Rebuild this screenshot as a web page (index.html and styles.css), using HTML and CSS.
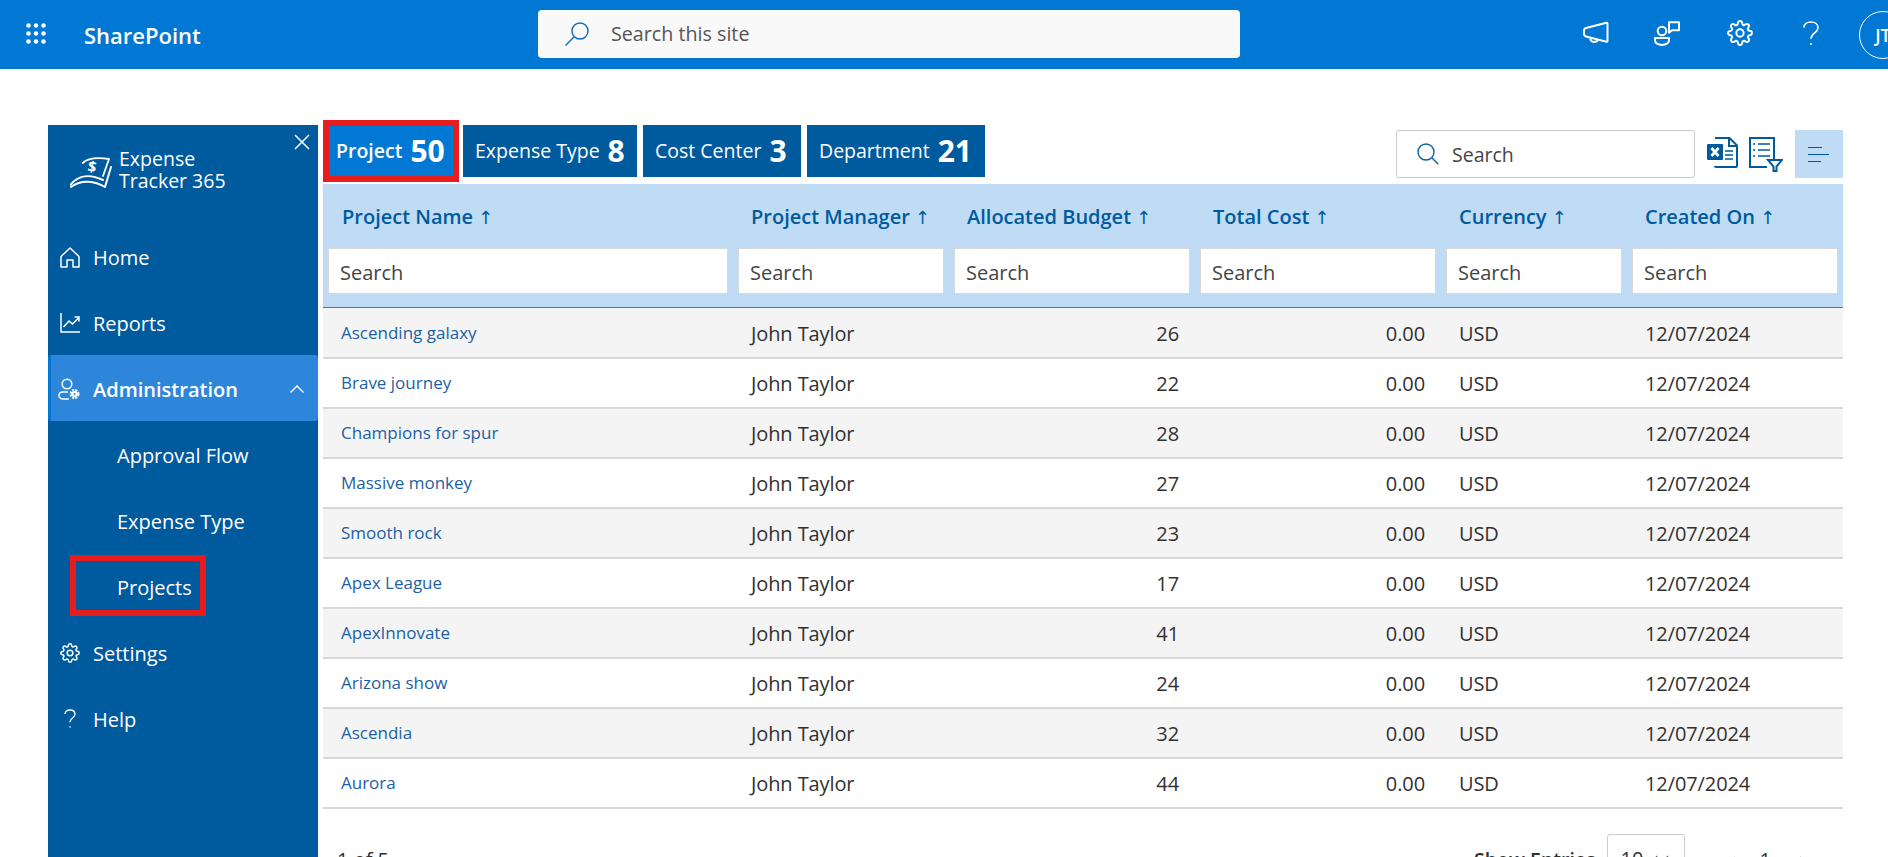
FILE: index.html
```html
<!DOCTYPE html>
<html lang="en">
<head>
<meta charset="utf-8">
<title>Expense Tracker 365</title>
<link rel="stylesheet" href="styles.css">
</head>
<body>
<header class="topbar">
  <svg class="waffle" width="20" height="21" viewBox="0 0 20 21" fill="#fff"><circle cx="2.5" cy="2.5" r="2.3"/><circle cx="10" cy="2.5" r="2.3"/><circle cx="17.5" cy="2.5" r="2.3"/><circle cx="2.5" cy="10.5" r="2.3"/><circle cx="10" cy="10.5" r="2.3"/><circle cx="17.5" cy="10.5" r="2.3"/><circle cx="2.5" cy="18.5" r="2.3"/><circle cx="10" cy="18.5" r="2.3"/><circle cx="17.5" cy="18.5" r="2.3"/></svg>
  <div class="brand">SharePoint</div>
  <div class="sitesearch">
    <svg width="26" height="26" viewBox="0 0 26 26" fill="none" stroke="#0f6cbd" stroke-width="1.4"><circle cx="16" cy="10" r="8"/><path d="M10.2 15.8 1.5 24.5"/></svg>
    <span>Search this site</span>
  </div>
  <div class="topicons">
    <svg class="ic-mega" width="26" height="24" viewBox="0 0 26 24" fill="none" stroke="#fff" stroke-width="2" stroke-linejoin="round"><path d="M24.500 2.500v17.500a.8.8 0 0 1-1 .8L3 15.500C1.500 15 1 14 1 12.500v-2.500c0-1.500.5-2.500 2-3l20.500-5.300a.8.8 0 0 1 1 .8z"/><path d="M7.500 16.500c-.5 3 1.500 4.500 3.500 4.500s3.500-1 4-2.500"/></svg>
    <svg class="ic-chat" width="26" height="25" viewBox="0 0 26 25" fill="none" stroke="#fff" stroke-width="2" stroke-linejoin="round"><circle cx="8" cy="10" r="4.300"/><path d="M1 17h14v2.500c0 2.500-3 4.500-7 4.500s-7-2-7-4.500z"/><path d="M15 1.200h10v8h-7l-3 2.500z"/></svg>
    <svg class="ic-gear" width="26" height="26" viewBox="0 0 24 24" fill="none" stroke="#fff" stroke-width="1.800"><circle cx="12" cy="12" r="3.400"/><path d="M19.400 15a1.650 1.650 0 0 0 .33 1.820l.06.06a2 2 0 0 1 0 2.830 2 2 0 0 1-2.830 0l-.06-.06a1.650 1.650 0 0 0-1.820-.33 1.650 1.650 0 0 0-1 1.510V21a2 2 0 0 1-2 2 2 2 0 0 1-2-2v-.09A1.650 1.650 0 0 0 9 19.400a1.650 1.650 0 0 0-1.820.33l-.06.06a2 2 0 0 1-2.830 0 2 2 0 0 1 0-2.830l.06-.06a1.650 1.650 0 0 0 .33-1.820 1.650 1.650 0 0 0-1.510-1H3a2 2 0 0 1-2-2 2 2 0 0 1 2-2h.09A1.650 1.650 0 0 0 4.600 9a1.650 1.650 0 0 0-.33-1.820l-.06-.06a2 2 0 0 1 0-2.830 2 2 0 0 1 2.830 0l.06.06a1.650 1.650 0 0 0 1.820.33H9a1.650 1.650 0 0 0 1-1.510V3a2 2 0 0 1 2-2 2 2 0 0 1 2 2v.09a1.650 1.650 0 0 0 1 1.510 1.650 1.650 0 0 0 1.820-.33l.06-.06a2 2 0 0 1 2.830 0 2 2 0 0 1 0 2.830l-.06.06a1.650 1.650 0 0 0-.33 1.820V9a1.650 1.650 0 0 0 1.510 1H21a2 2 0 0 1 2 2 2 2 0 0 1-2 2h-.09a1.650 1.650 0 0 0-1.510 1z"/></svg>
    <svg class="ic-help" width="16" height="25" viewBox="0 0 16 25" fill="none" stroke="#fff" stroke-width="1.600"><path d="M1 6.500C1 3 4 1 8 1s7 2.300 7 5.800c0 5.200-7 5.200-7 11"/><circle cx="8" cy="23" r="1" fill="#fff" stroke="none"/></svg>
    <div class="avatar">JT</div>
  </div>
</header>

<div class="app">
  <aside class="sidebar">
    <svg class="close" width="16" height="16" viewBox="0 0 16 16" stroke="#fff" stroke-width="1.500"><path d="M1 1l14 14M15 1 1 15"/></svg>
    <div class="logo">
      <svg width="42" height="34" viewBox="0 0 42 34" fill="none" stroke="#fff" stroke-linecap="round" stroke-linejoin="round"><path d="M12.700 8C18 3 26 2 39 4L33 21" stroke-width="1.800"/><path d="M41 12 35 32C25 26 12 24 1 32" stroke-width="2"/><path d="M0.500 30C8 20 20 19 33 25" stroke-width="2"/><text x="22" y="17" text-anchor="middle" font-family="Open Sans, sans-serif" font-size="15" font-weight="700" fill="#fff" stroke="none" transform="rotate(10 22 12)">$</text></svg>
      <div class="logotext">Expense<br>Tracker 365</div>
    </div>
    <nav class="nav">
      <a class="navitem">
        <svg width="20" height="21" viewBox="0 0 20 21" fill="none" stroke="#fff" stroke-width="1.500" stroke-linejoin="round"><path d="M1 9.500 10 1l9 8.500V20h-6v-7H7v7H1z"/></svg>
        <span>Home</span>
      </a>
      <a class="navitem">
        <svg width="20" height="20" viewBox="0 0 20 20" fill="none" stroke="#fff" stroke-width="1.500"><path d="M1 0v19h19"/><path d="M3.500 14 9 8l3.500 3L19 4.500M14.500 4H19v4.500"/></svg>
        <span>Reports</span>
      </a>
      <a class="navitem active">
        <svg width="22" height="22" viewBox="0 0 22 22" fill="none" stroke="#fff" stroke-width="1.500"><circle cx="9" cy="6" r="4.800"/><path d="M10 14H5c-2.500 0-4 1.500-4 3.500S3 21 5 21h6"/><circle cx="16.500" cy="16" r="3.500" stroke-width="3" stroke-dasharray="1.800 1"/><circle cx="16.500" cy="16" r="3" fill="#fff" stroke="none"/><circle cx="16.500" cy="16" r="1" fill="#2e86db" stroke="none"/></svg>
        <span>Administration</span>
        <svg class="chev" width="14" height="8" viewBox="0 0 14 8" fill="none" stroke="#fff" stroke-width="1.400"><path d="M.5 7.500 7 1l6.500 6.500"/></svg>
      </a>
      <a class="navitem sub">Approval Flow</a>
      <a class="navitem sub">Expense Type</a>
      <a class="navitem sub marked">Projects</a>
      <a class="navitem">
        <svg width="20" height="20" viewBox="0 0 24 24" fill="none" stroke="#fff" stroke-width="1.800"><circle cx="12" cy="12" r="3.400"/><path d="M19.400 15a1.650 1.650 0 0 0 .33 1.820l.06.06a2 2 0 0 1 0 2.830 2 2 0 0 1-2.830 0l-.06-.06a1.650 1.650 0 0 0-1.820-.33 1.650 1.650 0 0 0-1 1.510V21a2 2 0 0 1-2 2 2 2 0 0 1-2-2v-.09A1.650 1.650 0 0 0 9 19.400a1.650 1.650 0 0 0-1.820.33l-.06.06a2 2 0 0 1-2.830 0 2 2 0 0 1 0-2.830l.06-.06a1.650 1.650 0 0 0 .33-1.820 1.650 1.650 0 0 0-1.510-1H3a2 2 0 0 1-2-2 2 2 0 0 1 2-2h.09A1.650 1.650 0 0 0 4.600 9a1.650 1.650 0 0 0-.33-1.820l-.06-.06a2 2 0 0 1 0-2.830 2 2 0 0 1 2.830 0l.06.06a1.650 1.650 0 0 0 1.820.33H9a1.650 1.650 0 0 0 1-1.510V3a2 2 0 0 1 2-2 2 2 0 0 1 2 2v.09a1.650 1.650 0 0 0 1 1.510 1.650 1.650 0 0 0 1.820-.33l.06-.06a2 2 0 0 1 2.830 0 2 2 0 0 1 0 2.830l-.06.06a1.650 1.650 0 0 0-.33 1.820V9a1.650 1.650 0 0 0 1.510 1H21a2 2 0 0 1 2 2 2 2 0 0 1-2 2h-.09a1.650 1.650 0 0 0-1.510 1z"/></svg>
        <span>Settings</span>
      </a>
      <a class="navitem">
        <svg width="20" height="20" viewBox="0 0 20 20" fill="none" stroke="#fff" stroke-width="1.300"><path d="M5 5c0-2.500 2-4 5-4s5 1.700 5 4.200c0 3.800-5 3.800-5 8"/><circle cx="10" cy="18" r=".8" fill="#fff" stroke="none"/></svg>
        <span>Help</span>
      </a>
    </nav>
  </aside>

  <main class="content">
    <div class="toolbar">
      <div class="tabs">
        <a class="tab current">Project <b>50</b></a>
        <a class="tab t2">Expense Type <b>8</b></a>
        <a class="tab t3">Cost Center <b>3</b></a>
        <a class="tab t4">Department <b>21</b></a>
      </div>
      <div class="tools">
        <div class="gridsearch">
          <svg width="22" height="22" viewBox="0 0 22 22" fill="none" stroke="#0f5ea8" stroke-width="1.400"><circle cx="9" cy="9" r="8"/><path d="m14.800 14.800 6.500 6.500"/></svg>
          <span>Search</span>
        </div>
        <svg class="tool-xls" width="31" height="31" viewBox="0 0 31 31" fill="none" stroke="#005a9e" stroke-width="2"><path d="M8 1h14.500l7.500 7.500V29a1 1 0 0 1-1 1H9a1 1 0 0 1-1-1"/><path d="M22 1v8h8"/><path d="M18 14h8M18 18h8M18 22h8" stroke-width="1.500"/><rect x="0" y="7" width="16" height="16" rx="1" fill="#005a9e" stroke="none"/><path d="m4.500 11 7 8M11.500 11l-7 8" stroke="#fff" stroke-width="2.800"/></svg>
        <svg class="tool-filter" width="34" height="35" viewBox="0 0 34 35" fill="none" stroke="#005a9e" stroke-width="2"><path d="M18 30H1V1h24v21"/><path d="M4 7h2M9 7h12M4 13h2M9 13h12M4 19h2M9 19h12" stroke-width="1.500"/><path d="M19 23h14l-5.500 6.500V34h-3v-4.500z" fill="#fff"/></svg>
        <div class="togglebtn">
          <svg width="22" height="17" viewBox="0 0 22 17" stroke="#005a9e" stroke-width="1"><path d="M0 1.500h14M0 8.500h21M0 15.500h13"/></svg>
        </div>
      </div>
    </div>

    <table class="grid">
      <colgroup><col class="c1"><col class="c2"><col class="c3"><col class="c4"><col class="c5"><col class="c6"></colgroup>
      <thead>
        <tr class="heads">
          <th>Project Name <i>↑</i></th><th>Project Manager <i>↑</i></th><th>Allocated Budget <i>↑</i></th><th>Total Cost <i>↑</i></th><th>Currency <i>↑</i></th><th>Created On <i>↑</i></th>
        </tr>
        <tr class="filters">
          <td><div class="filter">Search</div></td><td><div class="filter">Search</div></td><td><div class="filter">Search</div></td><td><div class="filter">Search</div></td><td><div class="filter">Search</div></td><td><div class="filter">Search</div></td>
        </tr>
      </thead>
      <tbody>
        <tr><td><a class="link">Ascending galaxy</a></td><td>John Taylor</td><td class="num">26</td><td class="num">0.00</td><td>USD</td><td>12/07/2024</td></tr>
        <tr><td><a class="link">Brave journey</a></td><td>John Taylor</td><td class="num">22</td><td class="num">0.00</td><td>USD</td><td>12/07/2024</td></tr>
        <tr><td><a class="link">Champions for spur</a></td><td>John Taylor</td><td class="num">28</td><td class="num">0.00</td><td>USD</td><td>12/07/2024</td></tr>
        <tr><td><a class="link">Massive monkey</a></td><td>John Taylor</td><td class="num">27</td><td class="num">0.00</td><td>USD</td><td>12/07/2024</td></tr>
        <tr><td><a class="link">Smooth rock</a></td><td>John Taylor</td><td class="num">23</td><td class="num">0.00</td><td>USD</td><td>12/07/2024</td></tr>
        <tr><td><a class="link">Apex League</a></td><td>John Taylor</td><td class="num">17</td><td class="num">0.00</td><td>USD</td><td>12/07/2024</td></tr>
        <tr><td><a class="link">ApexInnovate</a></td><td>John Taylor</td><td class="num">41</td><td class="num">0.00</td><td>USD</td><td>12/07/2024</td></tr>
        <tr><td><a class="link">Arizona show</a></td><td>John Taylor</td><td class="num">24</td><td class="num">0.00</td><td>USD</td><td>12/07/2024</td></tr>
        <tr><td><a class="link">Ascendia</a></td><td>John Taylor</td><td class="num">32</td><td class="num">0.00</td><td>USD</td><td>12/07/2024</td></tr>
        <tr><td><a class="link">Aurora</a></td><td>John Taylor</td><td class="num">44</td><td class="num">0.00</td><td>USD</td><td>12/07/2024</td></tr>
      </tbody>
    </table>

    <div class="pager">
      <span class="count">1 of 5</span>
      <div class="pagectl">
        <span class="entries">Show Entries</span>
        <div class="select"><span>10</span><svg width="14" height="8" viewBox="0 0 14 8" fill="none" stroke="#666" stroke-width="1.200"><path d="m1 1 6 6 6-6"/></svg></div>
        <svg class="prev" width="9" height="16" viewBox="0 0 9 16" fill="none" stroke="#aaa" stroke-width="1.200"><path d="M8 1 1 8l7 7"/></svg>
        <span class="page">1</span>
        <svg class="next" width="9" height="16" viewBox="0 0 9 16" fill="none" stroke="#555" stroke-width="1.200"><path d="m1 1 7 7-7 7"/></svg>
      </div>
    </div>
  </main>
</div>
</body>
</html>
```

FILE: styles.css
```css
*, *::after { box-sizing: border-box; }
html, body { margin: 0; height: 857px; overflow: hidden; background: #fff; }
body { font-family: "Open Sans", "Noto Sans", sans-serif; color: #323130; }

.topbar { height: 69px; background: #0078d4; display: flex; align-items: center; color: #fff; }
.waffle { margin-left: 26px; margin-top: -2px; flex: none; }
.brand { margin-left: 38px; font-size: 22px; font-weight: 600; width: 455px; flex: none; margin-right: -1px; }
.sitesearch { width: 702px; height: 48px; background: #f9f9f9; border-radius: 4px; display: flex; align-items: center; padding-left: 26px; gap: 21px; font-size: 19.7px; color: #555; flex: none; margin-top: -2px; }
.sitesearch svg { flex: none; }
.topicons { flex: 1; display: flex; align-items: center; margin-top: -3px; min-width: 0; }
.ic-mega { margin-left: 343px; flex: none; }
.ic-chat { margin-left: 45px; flex: none; }
.ic-gear { margin-left: 47px; flex: none; }
.ic-help { margin-left: 50px; flex: none; }
.avatar { margin-left: 40px; width: 48px; height: 48px; border: 1px solid #fff; border-radius: 50%; flex: none; display: flex; align-items: center; justify-content: center; font-size: 18px; font-weight: 600; margin-top: 3px; }

.app { display: flex; padding: 56px 45px 0 48px; align-items: flex-start; }
.sidebar { position: relative; width: 270px; height: 732px; flex: none; background: #005a9e; color: #fff; }
.close { position: absolute; left: 246px; top: 9px; }
.logo { display: flex; align-items: flex-start; gap: 7px; padding: 23px 0 0 22px; height: 98px; }
.logo svg { flex: none; margin-top: 7px; }
.logotext { font-size: 19.5px; line-height: 22px; font-weight: 400; }

.nav { display: flex; flex-direction: column; }
.navitem { position: relative; height: 66px; display: flex; align-items: center; gap: 13px; padding: 2px 0 0 12px; font-size: 20px; }
.navitem svg { flex: none; }
.navitem.active { background: #2e86db; border-left: 3px solid #0078d4; border-radius: 3px; padding-left: 7px; font-weight: 600; }
.chev { position: absolute; left: 239px; top: 30px; }
.navitem.sub { padding-left: 69px; }
.marked::after { content: ""; position: absolute; left: 22px; top: 2px; width: 136px; height: 61px; border: 6px solid #e81c1c; }

.content { width: 1520px; margin-left: 5px; flex: none; }
.toolbar { display: flex; justify-content: space-between; height: 59px; }
.tabs { display: flex; align-items: flex-start; gap: 6px; padding-left: 6px; }
.tab { height: 52px; background: #005a9e; color: #fff; display: flex; align-items: center; gap: 8px; padding: 0 12px 2px; font-size: 19.5px; white-space: nowrap; }
.tab b { font-size: 30px; font-weight: 700; }
.t2 { width: 174px; }
.t3 { width: 158px; }
.t4 { width: 178px; }
.tab.current { background: #0078d4; outline: 6px solid #e81c1c; margin: 1px 4px 0 0; height: 50px; width: 124px; font-weight: 600; padding: 0 0 2px 7px; }
.tools { display: flex; align-items: flex-start; padding-top: 5px; }
.gridsearch { width: 299px; height: 48px; border: 1px solid #ccc; border-radius: 3px; display: flex; align-items: center; padding-left: 20px; gap: 13px; font-size: 19.5px; color: #444; }
.gridsearch svg { flex: none; }
.tool-xls { margin: 7px 0 0 12px; flex: none; }
.tool-filter { margin: 7px 0 0 11px; flex: none; }
.togglebtn { width: 48px; height: 48px; margin-left: 12px; background: #bfdcf4; display: flex; align-items: center; justify-content: center; }

.grid { width: 1520px; table-layout: fixed; border-collapse: collapse; }
.c1 { width: 410px; } .c2 { width: 216px; } .c3 { width: 246px; } .c4 { width: 246px; } .c5 { width: 186px; } .c6 { width: 216px; }
thead { background: #bfdcf4; border-bottom: 1px solid #2e7fcf; }
.heads { height: 64px; }
.heads th { text-align: left; font-size: 20px; font-weight: 600; color: #005a9e; padding: 0 0 0 18px; white-space: nowrap; }
.heads th:first-child { padding-left: 19px; }
.heads i { font-style: normal; font-weight: 400; font-size: 18px; font-family: "DejaVu Sans", sans-serif; }
.filters { height: 59px; }
.filters td { padding: 0 5px 13px 5px; }
.filter { height: 46px; background: #fff; border: 1px solid #d8d8d8; display: flex; align-items: center; padding: 2px 0 0 11px; font-size: 20px; color: #444; }

tbody tr { height: 50px; border-bottom: 2px solid #d8d8d8; }
tbody tr:nth-child(odd) { background: #f4f4f4; }
tbody td { font-size: 20px; padding: 2px 0 0 18px; letter-spacing: -.1px; white-space: nowrap; color: #323130; }
tbody td.num { text-align: right; padding: 2px 16px 0 0; }
.link { font-size: 17px; color: #1d5fa5; letter-spacing: 0; position: relative; top: -2px; }

.pager { display: flex; justify-content: space-between; align-items: flex-start; margin-top: 25px; height: 60px; padding-left: 14px; }
.count { font-size: 20px; margin-top: 12px; }
.pagectl { display: flex; align-items: flex-start; }
.entries { font-size: 19.5px; font-weight: 600; margin-top: 12px; }
.select { width: 78px; height: 50px; border: 1px solid #ccc; border-radius: 3px; margin-left: 11px; display: flex; align-items: center; justify-content: space-between; padding: 0 15px 0 13px; font-size: 20px; }
.prev { margin: 22px 0 0 42px; flex: none; }
.page { margin: 12px 0 0 24px; font-size: 20px; }
.next { margin: 22px 35px 0 28px; flex: none; }
```
